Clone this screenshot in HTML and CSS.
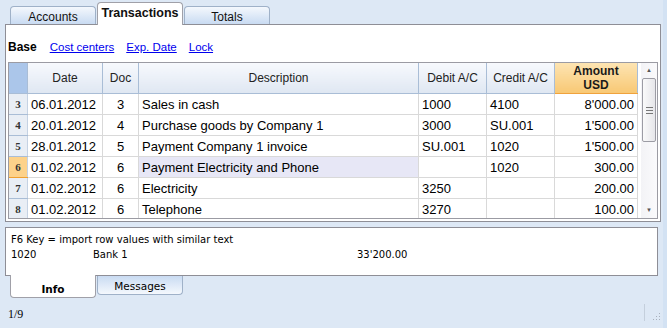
FILE: index.html
```html
<!DOCTYPE html>
<html lang="en">
<head>
    <meta charset="utf-8">
    <link rel="stylesheet" href="styles.css">
    <title>Transactions</title>
</head>
<body>
<div class="tabs">
    <div class="tab">Accounts</div>
    <div class="tab active">Transactions</div>
    <div class="tab">Totals</div>
</div>
<div class="panel">
    <div class="views">
        <b>Base</b>
        <a href="#">Cost centers</a>
        <a href="#">Exp. Date</a>
        <a href="#">Lock</a>
    </div>
    <div class="grid">
        <table>
            <tr class="head">
                <th class="rn"></th>
                <th class="c-date">Date</th>
                <th class="c-doc">Doc</th>
                <th class="c-desc">Description</th>
                <th class="c-acc">Debit A/C</th>
                <th class="c-acc">Credit A/C</th>
                <th class="c-amt sel">Amount<br>USD</th>
            </tr>
            <tr>
                <td class="rn">3</td><td>06.01.2012</td><td class="ctr">3</td><td>Sales in cash</td><td>1000</td><td>4100</td><td class="num">8'000.00</td>
            </tr>
            <tr>
                <td class="rn">4</td><td>20.01.2012</td><td class="ctr">4</td><td>Purchase goods by Company 1</td><td>3000</td><td>SU.001</td><td class="num">1'500.00</td>
            </tr>
            <tr>
                <td class="rn">5</td><td>28.01.2012</td><td class="ctr">5</td><td>Payment Company 1 invoice</td><td>SU.001</td><td>1020</td><td class="num">1'500.00</td>
            </tr>
            <tr>
                <td class="rn cur">6</td><td>01.02.2012</td><td class="ctr">6</td><td class="focus">Payment Electricity and Phone</td><td></td><td>1020</td><td class="num">300.00</td>
            </tr>
            <tr>
                <td class="rn">7</td><td>01.02.2012</td><td class="ctr">6</td><td>Electricity</td><td>3250</td><td></td><td class="num">200.00</td>
            </tr>
            <tr>
                <td class="rn">8</td><td>01.02.2012</td><td class="ctr">6</td><td>Telephone</td><td>3270</td><td></td><td class="num">100.00</td>
            </tr>
        </table>
        <div class="scroll">
            <div class="arrow">&#9650;</div>
            <div class="thumb"><span></span><span></span><span></span></div>
            <div class="track"></div>
            <div class="arrow">&#9660;</div>
        </div>
    </div>
</div>
<div class="info">
    <div>F6 Key = import row values with similar text</div>
    <div class="info-row"><span class="i-acc">1020</span><span class="i-name">Bank 1</span><span>33'200.00</span></div>
</div>
<div class="btabs">
    <div class="btab active">Info</div>
    <div class="btab">Messages</div>
</div>
<div class="status">
    <span>1/9</span>
    <span class="grip">
        <svg width="8" height="8" viewBox="0 0 8 8">
            <rect x="6" y="0" width="1" height="1" fill="#a8b0bc"/>
            <rect x="3" y="3" width="1" height="1" fill="#a8b0bc"/>
            <rect x="6" y="3" width="1" height="1" fill="#a8b0bc"/>
            <rect x="0" y="6" width="1" height="1" fill="#a8b0bc"/>
            <rect x="3" y="6" width="1" height="1" fill="#a8b0bc"/>
            <rect x="6" y="6" width="1" height="1" fill="#a8b0bc"/>
        </svg>
    </span>
</div>
</body>
</html>
```

FILE: styles.css
```css
body {
    margin: 0;
    height: 328px;
    background-color: #dde8f5;
    font-family: "Liberation Sans", Arial, sans-serif;
    font-size: 12px;
    color: #000;
    overflow: hidden;
    border-right: 4px solid #d3e2f3;
    box-sizing: border-box;
}

.tabs {
    display: flex;
    align-items: flex-end;
    height: 24px;
    padding-left: 10px;
}
.tab {
    width: 84px;
    height: 17px;
    margin-right: 1px;
    border: 1px solid #9fb1c8;
    border-bottom: none;
    border-radius: 4px 4px 0 0;
    background: linear-gradient(#f4f8fd, #c9dbf2);
    font-size: 12px;
    text-align: center;
    line-height: 20px;
    color: #111;
}
.tab.active {
    height: 22px;
    background: #fff;
    border-color: #a0a0a8;
    font-weight: bold;
    font-size: 12.5px;
    line-height: 20px;
    margin-bottom: -1px;
    position: relative;
}

.panel {
    margin: 0 2px 0 5px;
    height: 196px;
    border: 1px solid #8e8e96;
    background: #fff;
}
.views {
    height: 31px;
    padding: 6px 0 0 2px;
    display: flex;
    align-items: center;
    gap: 12px;
    font-size: 11.5px;
}
.views b { font-size: 12px; margin-right: 1px; }
.views a { color: #0000ee; }

.grid {
    display: flex;
    margin: 0 2px 0 2px;
    height: 155px;
    border: 1px solid #9b9ba3;
    overflow: hidden;
}
table {
    border-collapse: collapse;
    table-layout: fixed;
    width: 629px;
    font-size: 13px;
}
th {
    height: 30px;
    padding: 0;
    font-weight: normal;
    font-size: 12px;
    color: #222;
    background: linear-gradient(#f7f9fd, #dfe7f2);
    border-right: 1px solid #a9bdd6;
    border-bottom: 1px solid #a9bdd6;
}
th.rn { width: 18px; background: #abc6ea; }
th.c-date { width: 74px; }
th.c-doc { width: 35px; }
th.c-desc { width: 279px; }
th.c-acc { width: 67px; }
th.c-amt { width: 82px; }
th.sel {
    background: linear-gradient(#fde4b2, #f8c874);
    border-bottom: 1px solid #f0a23c;
    font-weight: bold;
    font-size: 12px;
    line-height: 14px;
    color: #1a1a1a;
}
td {
    height: 20px;
    padding: 0 3px;
    border-right: 1px solid #d9d9d9;
    border-bottom: 1px solid #d9d9d9;
    white-space: nowrap;
    overflow: hidden;
}
td.rn {
    padding: 0;
    text-align: center;
    background: #e9eef5;
    border-bottom: 1px solid #a9bdd6;
    border-right: 1px solid #c5d2e3;
    font-family: "Liberation Serif", serif;
    font-weight: bold;
    font-size: 11px;
    color: #333;
}
td.rn.cur {
    background: #fdd28a;
    border-bottom: 1px solid #f0a030;
}
td.ctr { text-align: center; }
td.num { text-align: right; }
td.focus { background: #e7e7f6; }

.scroll {
    width: 17px;
    margin-left: 3px;
    display: flex;
    flex-direction: column;
    background: linear-gradient(90deg, #f3f3f6, #fafafc);
}
.arrow {
    height: 15px;
    font-size: 6px;
    color: #555;
    text-align: center;
    line-height: 15px;
}
.thumb {
    height: 62px;
    margin: 0 1px;
    border: 1px solid #9c9ca4;
    border-radius: 2px;
    background: linear-gradient(90deg, #fafafa, #e6e6ea);
    display: flex;
    flex-direction: column;
    justify-content: center;
    align-items: center;
    gap: 2px;
}
.thumb span {
    width: 7px;
    height: 1px;
    background: #777;
}
.track { flex: 1; }

.info {
    margin: 5px 5px 0 5px;
    height: 43px;
    padding: 4px 0 0 5px;
    border: 1px solid #8e8e96;
    background: #fff;
    font-family: "DejaVu Sans", sans-serif;
    font-size: 10px;
    line-height: 15px;
}
.info-row { display: flex; }
.i-acc { width: 82px; }
.i-name { width: 264px; }

.btabs {
    display: flex;
    align-items: flex-start;
    padding-left: 10px;
}
.btab {
    width: 84px;
    height: 18px;
    margin-right: 1px;
    border: 1px solid #9fb1c8;
    border-top: none;
    border-radius: 0 0 4px 4px;
    background: linear-gradient(#c9dbf2, #f4f8fd);
    font-family: "DejaVu Sans", sans-serif;
    font-size: 10.5px;
    text-align: center;
    line-height: 20px;
}
.btab.active {
    height: 22px;
    margin-top: -1px;
    background: #fff;
    border-color: #a0a0a8;
    font-weight: bold;
    line-height: 28px;
}

.status {
    display: flex;
    justify-content: space-between;
    padding: 9px 0 0 8px;
    font-family: "Liberation Serif", serif;
    font-size: 12px;
}
.grip {
    width: 16px;
    height: 17px;
    margin-top: -3px;
    margin-right: 2px;
    border-left: 1px solid #c4cfdc;
    display: flex;
    align-items: flex-end;
    justify-content: flex-end;
}
```
